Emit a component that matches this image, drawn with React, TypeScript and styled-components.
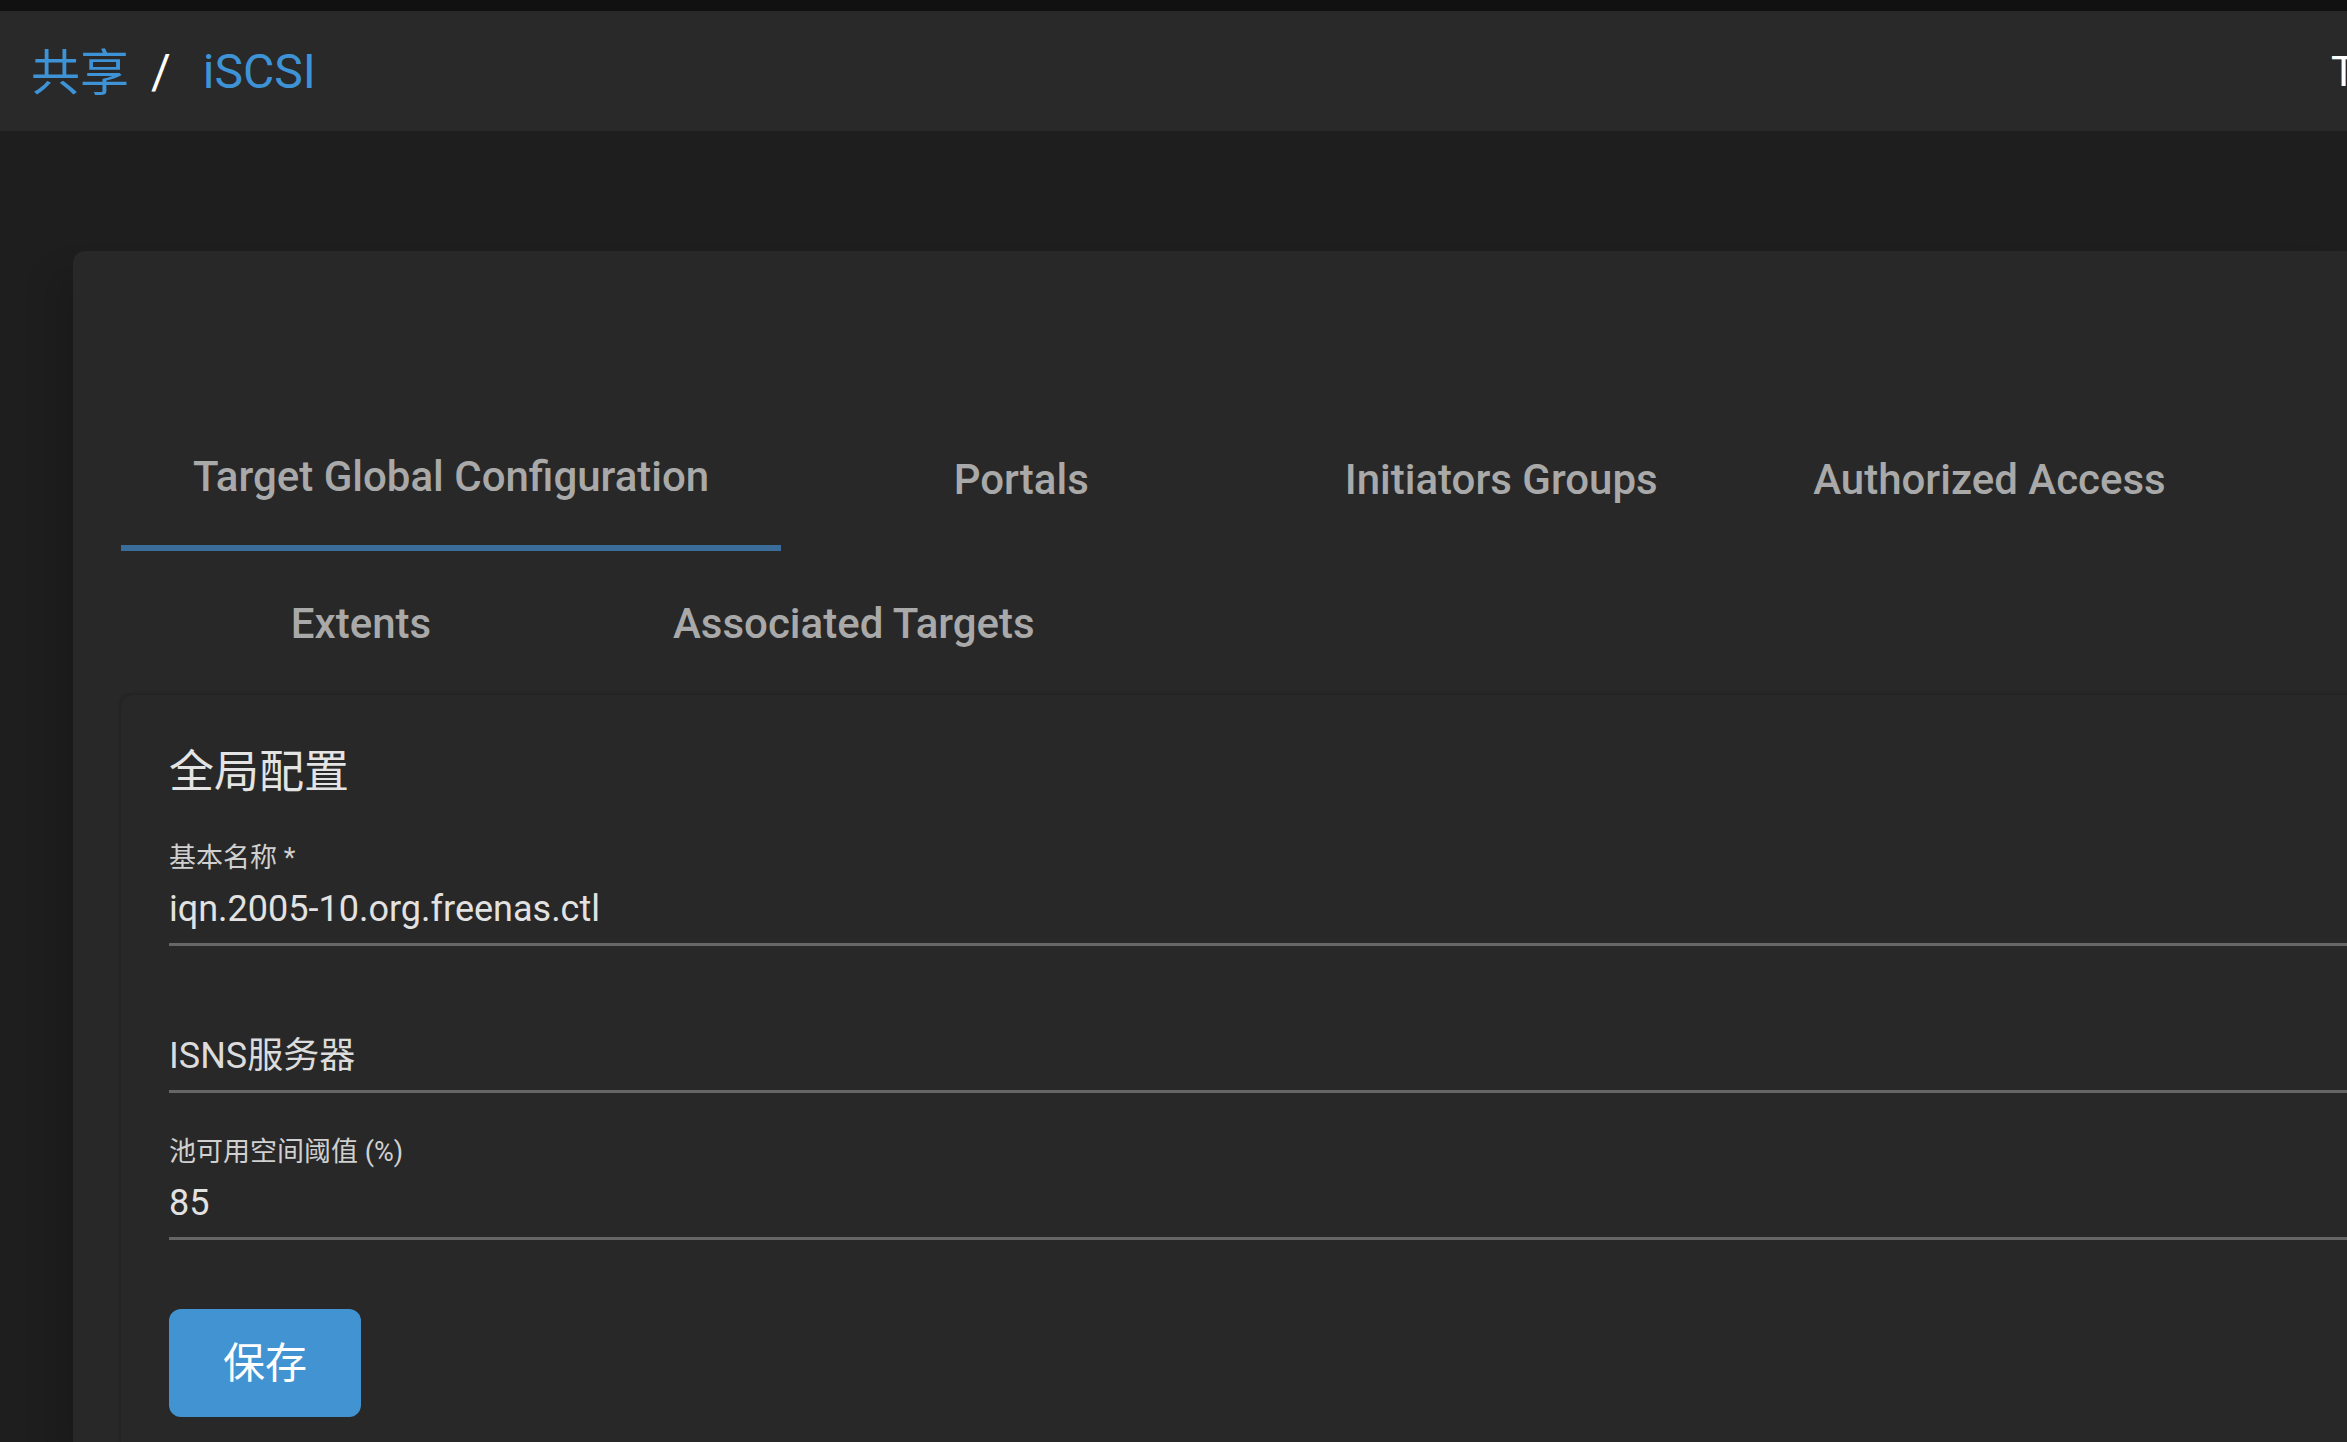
import React from "react";
import styled, { createGlobalStyle } from "styled-components";

const Global = createGlobalStyle`
  html, body { margin: 0; padding: 0; height: 100%; background: #1e1e1e; overflow: hidden; }
  #root { height: 100%; }
  * { box-sizing: border-box; }
`;

const FONT = `Roboto, "Noto Sans CJK SC", sans-serif`;

const Page = styled.div`
  width: 2347px;
  height: 1442px;
  overflow: hidden;
  display: flex;
  flex-direction: column;
  background: #1e1e1e;
  font-family: ${FONT};
`;
const TopStrip = styled.div`
  height: 11px;
  flex: none;
  background: #111111;
`;
const Toolbar = styled.header`
  height: 120px;
  flex: none;
  background: #292929;
  display: flex;
  align-items: center;
  justify-content: space-between;
  padding-left: 31px;
  overflow: hidden;
`;
const Crumbs = styled.nav`
  display: flex;
  align-items: center;
  font-size: 48px;
`;
const Crumb = styled.span<{ $cjk?: boolean }>`
  color: #3e93d6;
  font-size: ${(p) => (p.$cjk ? "49px" : "48px")};
  padding-bottom: ${(p) => (p.$cjk ? "6px" : "0")};
`;
const Sep = styled.span`
  color: #ffffff;
  margin: 0 32px 0 22px;
`;
const ToolbarRight = styled.span`
  color: #ffffff;
  font-size: 42px;
  margin-right: -9px;
  flex: none;
`;
const Main = styled.main`
  flex: 1;
  display: flex;
  padding: 120px 0 0 73px;
  min-height: 0;
`;
const Card = styled.section`
  flex: 1;
  min-width: 0;
  background: #282828;
  border-radius: 12px 0 0 0;
  box-shadow: -20px 20px 30px rgba(0, 0, 0, 0.12);
  padding: 156px 0 0 48px;
  display: flex;
  flex-direction: column;
`;
const TabRow = styled.div`
  display: flex;
  height: 144px;
  flex: none;
`;
const Tab = styled.div<{ $active?: boolean }>`
  min-width: 480px;
  height: 144px;
  padding: 0 72px;
  display: flex;
  align-items: center;
  justify-content: center;
  font-size: 42px;
  font-weight: 500;
  color: #a9a9a9;
  border-bottom: ${(p) => (p.$active ? "6px solid #3a6d99" : "none")};
`;
const Panel = styled.div`
  flex: 1;
  border-radius: 12px 0 0 0;
  box-shadow: 0 -2px 2px #242424, -2px 0 2px #252525;
  padding: 51px 0 0 48px;
  display: flex;
  flex-direction: column;
  align-items: flex-start;
`;
const Title = styled.h2`
  margin: 0 0 33px;
  font-size: 45px;
  line-height: 54px;
  font-weight: 400;
  color: #e4e4e4;
`;
const Field = styled.div`
  width: 100%;
  height: 147px;
  flex: none;
  display: flex;
  flex-direction: column;
  justify-content: flex-start;
`;
const FieldBox = styled.div`
  height: 113px;
  flex: none;
  border-bottom: 3px solid #666666;
  display: flex;
  flex-direction: column;
  justify-content: flex-end;
  padding-bottom: 13px;
`;
const Label = styled.label`
  font-size: 27px;
  line-height: 32px;
  color: #d0d0d0;
  margin-bottom: 14px;
`;
const Value = styled.div<{ $placeholder?: boolean }>`
  font-size: 36px;
  line-height: 42px;
  color: ${(p) => (p.$placeholder ? "#dcdcdc" : "#e2e2e2")};
`;
const SaveButton = styled.button`
  width: 192px;
  height: 108px;
  margin-top: 35px;
  padding: 0 0 8px;
  border: none;
  border-radius: 12px;
  background: #4293d2;
  color: #ffffff;
  font-family: ${FONT};
  font-size: 42px;
`;

export default function App() {
  return (
    <Page>
      <Global />
      <TopStrip />
      <Toolbar>
        <Crumbs>
          <Crumb $cjk>共享</Crumb>
          <Sep>/</Sep>
          <Crumb>iSCSI</Crumb>
        </Crumbs>
        <ToolbarRight>T</ToolbarRight>
      </Toolbar>
      <Main>
        <Card>
          <TabRow>
            <Tab $active>Target Global Configuration</Tab>
            <Tab>Portals</Tab>
            <Tab>Initiators Groups</Tab>
            <Tab>Authorized Access</Tab>
          </TabRow>
          <TabRow>
            <Tab>Extents</Tab>
            <Tab>Associated Targets</Tab>
          </TabRow>
          <Panel>
            <Title>全局配置</Title>
            <Field>
              <FieldBox>
                <Label>基本名称 *</Label>
                <Value>iqn.2005-10.org.freenas.ctl</Value>
              </FieldBox>
            </Field>
            <Field>
              <FieldBox>
                <Value $placeholder>ISNS服务器</Value>
              </FieldBox>
            </Field>
            <Field>
              <FieldBox>
                <Label>池可用空间阈值 (%)</Label>
                <Value>85</Value>
              </FieldBox>
            </Field>
            <SaveButton>保存</SaveButton>
          </Panel>
        </Card>
      </Main>
    </Page>
  );
}
